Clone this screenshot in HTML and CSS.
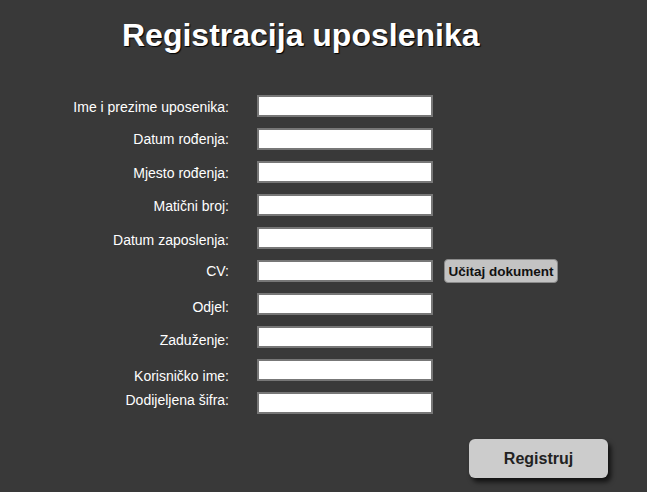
FILE: index.html
```html
<!DOCTYPE html>
<html>
<head>
<meta charset="utf-8">
<link rel="stylesheet" href="styles.css">
</head>
<body>
<div class="page">
  <h1 class="title">Registracija uposlenika</h1>
  <form class="form">
    <label class="lbl n1">Ime i prezime uposenika:</label><input class="inp" type="text"><span></span>
    <label class="lbl">Datum rođenja:</label><input class="inp" type="text"><span></span>
    <label class="lbl n1">Mjesto rođenja:</label><input class="inp" type="text"><span></span>
    <label class="lbl n1">Matični broj:</label><input class="inp" type="text"><span></span>
    <label class="lbl n2">Datum zaposlenja:</label><input class="inp" type="text"><span></span>
    <label class="lbl">CV:</label><input class="inp" type="text"><button type="button" class="btn-small">Učitaj dokument</button>
    <label class="lbl n3">Odjel:</label><input class="inp" type="text"><span></span>
    <label class="lbl n3">Zaduženje:</label><input class="inp" type="text"><span></span>
    <label class="lbl n6">Korisničko ime:</label><input class="inp" type="text"><span></span>
    <label class="lbl m3">Dodijeljena šifra:</label><input class="inp" type="text"><span></span>
  </form>
  <div class="actions">
    <button type="button" class="btn-main">Registruj</button>
  </div>
</div>
</body>
</html>
```
FILE: styles.css
```css
html, body {
  margin: 0;
  padding: 0;
  background: #393939;
  font-family: "Liberation Sans", Arial, sans-serif;
}
.page {
  width: 647px;
  height: 492px;
  overflow: hidden;
  padding-top: 16px;
  box-sizing: border-box;
}
.title {
  margin: 0 0 0 122px;
  font-size: 32px;
  font-weight: bold;
  color: #ffffff;
  line-height: 38px;
  text-shadow: 1px 1px 1px #000;
}
.form {
  margin-top: 41px;
  display: grid;
  grid-template-columns: 229px 176px auto;
  grid-auto-rows: 22px;
  column-gap: 28px;
  row-gap: 11px;
  align-items: center;
}
.lbl {
  text-align: right;
  color: #ffffff;
  font-size: 14px;
  line-height: 16px;
}
.n1 { position: relative; top: 1px; }
.n2 { position: relative; top: 2px; }
.n3 { position: relative; top: 3px; }
.n6 { position: relative; top: 6px; }
.m3 { position: relative; top: -3px; }
.inp {
  box-sizing: border-box;
  width: 176px;
  height: 22px;
  margin: 0;
  border: 2px solid #777777;
  background: #ffffff;
  padding: 0 3px;
}
.btn-small {
  justify-self: start;
  margin-left: -17px;
  width: 114px;
  height: 24px;
  padding: 0;
  background: #c3c3c3;
  border: 1px solid #8a8a8a;
  border-radius: 4px;
  font-family: "Liberation Sans", Arial, sans-serif;
  font-weight: bold;
  font-size: 13.5px;
  color: #111111;
}
.actions {
  display: flex;
  justify-content: flex-end;
  padding-right: 39px;
  margin-top: 25px;
}
.btn-main {
  width: 139px;
  height: 39px;
  background: #cccccc;
  border: none;
  border-radius: 6px;
  box-shadow: 3px 4px 5px rgba(0,0,0,0.7);
  font-family: "Liberation Sans", Arial, sans-serif;
  font-weight: bold;
  font-size: 16px;
  color: #222222;
}
```
